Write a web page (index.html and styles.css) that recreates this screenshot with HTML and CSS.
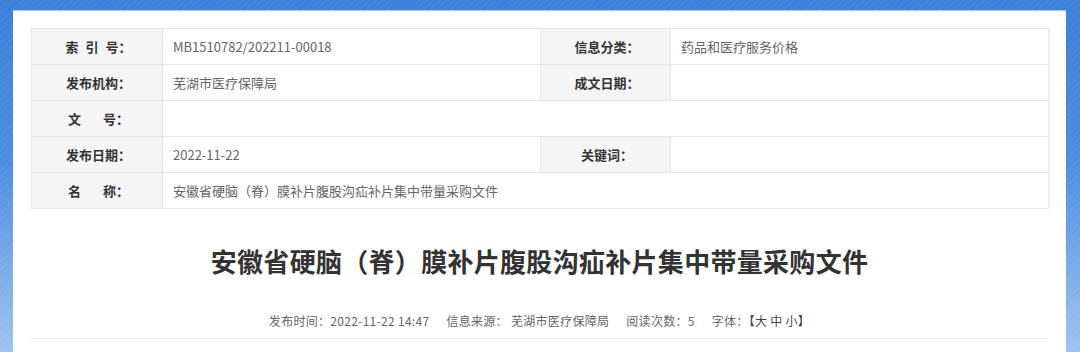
FILE: index.html
```html
<!DOCTYPE html>
<html lang="zh-CN">
<head>
    <meta charset="UTF-8">
    <meta name="viewport" content="width=device-width, initial-scale=1.0">
    <title>安徽省硬脑（脊）膜补片腹股沟疝补片集中带量采购文件</title>
    <link rel="stylesheet" href="styles.css">
</head>
<body>

    <div class="panel">

        <!-- 信息公开属性表 -->
        <table class="info-table">
            <colgroup>
                <col class="col-label">
                <col class="col-value">
                <col class="col-label2">
                <col class="col-value2">
            </colgroup>
            <tr>
                <th>索<span class="sp"></span>引<span class="sp"></span>号：</th>
                <td>MB1510782/202211-00018</td>
                <th>信息分类：</th>
                <td>药品和医疗服务价格</td>
            </tr>
            <tr>
                <th>发布机构：</th>
                <td>芜湖市医疗保障局</td>
                <th>成文日期：</th>
                <td></td>
            </tr>
            <tr>
                <th>文<span class="gap"></span>号：</th>
                <td colspan="3"></td>
            </tr>
            <tr>
                <th>发布日期：</th>
                <td>2022-11-22</td>
                <th>关键词：</th>
                <td></td>
            </tr>
            <tr>
                <th>名<span class="gap"></span>称：</th>
                <td colspan="3">安徽省硬脑（脊）膜补片腹股沟疝补片集中带量采购文件</td>
            </tr>
        </table>

        <h1 class="article-title">安徽省硬脑（脊）膜补片腹股沟疝补片集中带量采购文件</h1>

        <div class="article-meta">
            <span>发布时间：2022-11-22 14:47</span>
            <span>信息来源： 芜湖市医疗保障局</span>
            <span>阅读次数：5</span>
            <span>字体：<b class="font-size">【大 中 小】</b></span>
        </div>

    </div>

</body>
</html>
```

FILE: styles.css
```css
/* page background: blue with faint diagonal stripes */
html, body {
    margin: 0;
    padding: 0;
    height: 100%;
    overflow: hidden;
}

body {
    font-family: "Noto Sans CJK SC", "Noto Sans", sans-serif;
    background-color: #3a80da;
    background-image:
        repeating-linear-gradient(135deg, rgba(255, 255, 255, 0.05) 0 2px, rgba(255, 255, 255, 0) 2px 5px),
        linear-gradient(180deg, #3a7fd9 0%, #4a8ce0 45%, #9fc2ef 100%);
}

.panel {
    margin: 10px 14px 0 13px;
    padding: 18px 18px 0 18px;
    background: white;
    border-top: 1px solid #a9c8f0;
    height: 323px;
    overflow: hidden;
}

/* --- info table --- */
.info-table {
    width: 1017px;
    border-collapse: collapse;
    table-layout: fixed;
    font-size: 13px;
    margin-top: -1px;
    border-right: 2px solid #efefef;
}

.col-label { width: 131px; }
.col-value { width: 378px; }
.col-label2 { width: 130px; }
.col-value2 { width: 378px; }

.info-table th,
.info-table td {
    height: 36px;
    padding: 0;
    border: 1px solid #e6e6e6;
    box-sizing: border-box;
    white-space: nowrap;
}

.info-table th {
    background-color: #f5f5f5;
    color: #333;
    font-weight: bold;
    text-align: center;
    padding-left: 3px;
}

.info-table td {
    color: #666;
    padding-left: 10px;
    text-align: left;
}

.info-table .sp {
    display: inline-block;
    width: 7px;
}

.info-table .gap {
    display: inline-block;
    width: 22px;
}

/* --- article heading --- */
.article-title {
    margin: 34px 0 0 0;
    font-size: 26px;
    line-height: 36px;
    font-weight: bold;
    color: #333;
    text-align: center;
    letter-spacing: 0.3px;
}

.article-meta {
    margin-top: 32px;
    padding-bottom: 7px;
    font-size: 12px;
    line-height: 20px;
    color: #666;
    text-align: center;
    letter-spacing: 0.3px;
    border-bottom: 1px solid #e6e6e6;
    width: 1017px;
}

.article-meta span {
    margin: 0 7px;
}

.article-meta .font-size {
    font-weight: normal;
    color: #444;
}
```
